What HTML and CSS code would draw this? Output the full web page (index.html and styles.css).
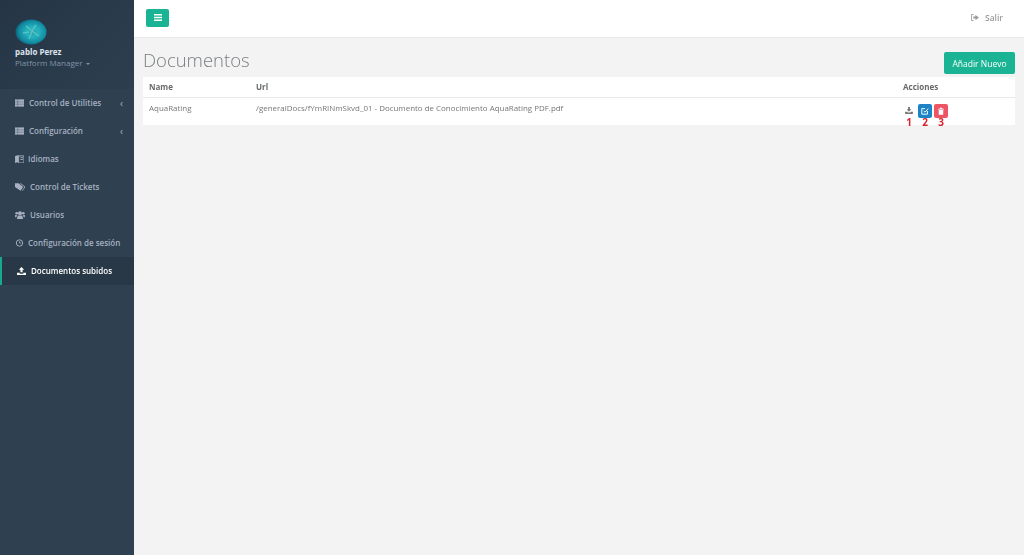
FILE: index.html
```html
<!DOCTYPE html>
<html lang="es">
<head>
<meta charset="utf-8">
<title>Documentos</title>
<link rel="stylesheet" href="styles.css">
</head>
<body>
<div class="app">
  <nav class="sidebar">
    <div class="profile">
      <svg class="avatar" viewBox="0 0 32 26" width="32" height="26">
        <defs><radialGradient id="av" cx="55%" cy="50%" r="55%"><stop offset="0" stop-color="#2f9fa8"/><stop offset="0.35" stop-color="#26b3c0"/><stop offset="0.8" stop-color="#118a9f"/><stop offset="1" stop-color="#0d5f78"/></radialGradient></defs>
        <ellipse cx="16" cy="13" rx="15.500" ry="12.500" fill="url(#av)"/>
        <path d="M11 7l6 5 4-6M17 12l-3 8M17 12l7 5M8 14l6-1" stroke="#54c4c4" stroke-width="1.400" fill="none"/>
      </svg>
      <div class="user-name">pablo Perez</div>
      <div class="user-role">Platform Manager <span class="caret"></span></div>
    </div>
    <ul class="menu">
      <li class="item"><svg class="ic" viewBox="0 0 10 8"><path d="M0 0h10v8H0z" fill="currentColor"/><path d="M3 0v8M0 2.700h10M0 5.300h10" stroke="#2f4050" stroke-width=".4"/></svg><span>Control de Utilities</span><span class="chev">‹</span></li>
      <li class="item"><svg class="ic" viewBox="0 0 10 8"><path d="M0 0h10v8H0z" fill="currentColor"/><path d="M3 0v8M0 2.700h10M0 5.300h10" stroke="#2f4050" stroke-width=".4"/></svg><span>Configuración</span><span class="chev">‹</span></li>
      <li class="item"><svg class="ic small" viewBox="0 0 10 9"><path d="M0 1l4-1v8L0 9z" fill="currentColor"/><path d="M4 1h6v8H4z" fill="none" stroke="currentColor"/><path d="M6 3h3M6 5h3" stroke="currentColor"/></svg><span>Idiomas</span></li>
      <li class="item"><svg class="ic wide" viewBox="0 0 11 8"><path d="M0 0h4l5 4-3 4-6-4z" fill="currentColor"/><path d="M6 0l5 4-3 4" fill="none" stroke="currentColor"/></svg><span>Control de Tickets</span></li>
      <li class="item"><svg class="ic wide" viewBox="0 0 11 9"><circle cx="5.500" cy="2.500" r="2.200" fill="currentColor"/><circle cx="1.800" cy="2.500" r="1.500" fill="currentColor"/><circle cx="9.200" cy="2.500" r="1.500" fill="currentColor"/><path d="M3 5h5l1 4H2zM0 4.500h2L1.500 7H0zM9 4.500h2V7H9.500z" fill="currentColor"/></svg><span>Usuarios</span></li>
      <li class="item"><svg class="ic small" viewBox="0 0 10 10"><circle cx="5" cy="5" r="4" fill="none" stroke="currentColor" stroke-width="1.200"/><path d="M5 2.800V5h2" fill="none" stroke="currentColor"/></svg><span>Configuración de sesión</span></li>
      <li class="item active"><svg class="ic up" viewBox="0 0 10 9"><path d="M5 0l3 3H6.200v3H3.800V3H2zM0 6.500h3v1h4v-1h3V9H0z" fill="currentColor"/></svg><span>Documentos subidos</span></li>
    </ul>
  </nav>
  <main class="main">
    <header class="topbar">
      <button class="toggle"><svg viewBox="0 0 8 7" width="8" height="7"><path d="M0 .7h8M0 3.500h8M0 6.300h8" stroke="#fff" stroke-width="1.400"/></svg></button>
      <div class="logout"><svg viewBox="0 0 9 8" width="8" height="7"><path d="M3 .5H.5v7H3" fill="none" stroke="currentColor"/><path d="M5 1l4 3-4 3V5.200H2.500V2.800H5z" fill="currentColor"/></svg><span>Salir</span></div>
    </header>
    <section class="content">
      <div class="heading">
        <h1>Documentos</h1>
        <button class="add">Añadir Nuevo</button>
      </div>
      <table class="table">
        <thead>
          <tr><th class="c1">Name</th><th class="c2">Url</th><th class="c3">Acciones</th></tr>
        </thead>
        <tbody>
          <tr>
            <td>AquaRating</td>
            <td>/generalDocs/fYmRINmSkvd_01 - Documento de Conocimiento AquaRating PDF.pdf</td>
            <td class="actions">
              <div class="act">
                <div class="act-col"><span class="ab plain"><svg viewBox="0 0 10 9" width="8" height="7"><path d="M3.800 0h2.400v3H8L5 6 2 3h1.800zM0 6h2.500l1 1.200h3L7.500 6H10v3H0z" fill="#777"/></svg></span><b>1</b></div>
                <div class="act-col"><span class="ab blue"><svg viewBox="0 0 10 10" width="8" height="8"><path d="M8 5v4H1V2h4" fill="none" stroke="#fff" stroke-width="1.200"/><path d="M3.500 5l1.500 1.500L9 2" fill="none" stroke="#fff" stroke-width="1.200"/></svg></span><b>2</b></div>
                <div class="act-col"><span class="ab red"><svg viewBox="0 0 8 10" width="6" height="8"><path d="M0 2h8v1H0zM2.500 2V.5h3V2M1 3.500h6V10H1z" fill="#fff"/></svg></span><b>3</b></div>
              </div>
            </td>
          </tr>
        </tbody>
      </table>
    </section>
  </main>
</div>
</body>
</html>
```
FILE: styles.css
```css
* { box-sizing: border-box; }
html, body { margin: 0; height: 100%; }
body { font-family: "Open Sans", "Liberation Sans", sans-serif; color: #676a6c; background: #f3f3f4; overflow: hidden; }
.app { display: flex; height: 555px; filter: blur(0.35px); }
.sidebar { width: 134px; flex: none; background: #2f4050; }
.profile { height: 89px; padding: 19px 15px 0; background: linear-gradient(135deg, #253545 0%, #2a3b4c 60%, #2d3e4f 100%); }
.avatar { display: block; }
.user-name { font-size: 8px; font-weight: 700; color: #dfe4ed; line-height: 11px; margin-top: 1px; }
.user-role { font-size: 8px; color: #8095a8; line-height: 11px; }
.caret { display: inline-block; width: 0; height: 0; border: 2.500px solid transparent; border-top-color: #8095a8; border-bottom: 0; vertical-align: 1.500px; margin-left: 1px; }
.menu { list-style: none; margin: -0.500px 0 0; padding: 0; }
.item { height: 28px; display: flex; align-items: center; padding: 0 11px 0 15px; gap: 5px; font-size: 8px; font-weight: 600; color: #a7b1c2; white-space: nowrap; }
.ic { width: 9px; height: 8px; flex: none; }
.ic.small { margin-right: -1px; }
.ic.wide { width: 10px; }
.item.active { background: #293846; color: #fff; border-left: 2.500px solid #19aa8d; padding-left: 15px; gap: 5px; }
.chev { margin-left: auto; font-size: 10px; font-weight: 400; line-height: 1; }
.main { flex: 1; display: flex; flex-direction: column; min-width: 0; }
.topbar { height: 38px; flex: none; background: #fff; border-bottom: 1px solid #e7eaec; display: flex; align-items: center; justify-content: space-between; padding: 0 21px 2px 12px; }
.toggle { width: 23px; height: 18px; background: #1ab394; border: 0; border-radius: 2px; padding: 0; display: flex; align-items: center; justify-content: center; }
.logout { display: flex; align-items: center; gap: 6px; font-size: 8.500px; font-weight: 600; color: #999c9e; }
.content { padding: 0 9px; }
.heading { height: 39px; display: flex; align-items: flex-end; justify-content: space-between; }
h1 { margin: 0; font-size: 18.500px; font-weight: 300; color: #7b7e80; line-height: 30px; padding-bottom: 2px; }
.add { width: 71px; height: 22px; margin-bottom: 3px; background: #1ab394; border: 0; border-radius: 2px; color: #fff; font: 400 8.500px "Open Sans", sans-serif; padding: 0; }
.table { width: 100%; border-collapse: collapse; background: #fff; table-layout: fixed; font-size: 8px; }
.table th { text-align: left; font-weight: 700; height: 20px; padding: 0 6px; border-bottom: 1px solid #e7eaec; color: #676a6c; }
.table td { height: 27px; padding: 0 6px 6px; color: #777; vertical-align: middle; font-size: 7.950px; }
.c1 { width: 107px; }
.c3 { width: 118px; }
.table td.actions { padding: 0 0 0 5px; vertical-align: top; }
.act { display: flex; gap: 2px; margin: 6px 0 0 0; height: 21px; padding-left: 0; }
.act-col { width: 14px; display: flex; flex-direction: column; align-items: center; }
.act-col b { color: #d9232d; font-size: 10px; line-height: 11px; font-weight: 700; margin-top: -0.500px; }
.ab { width: 14px; height: 14px; flex: none; border-radius: 2px; display: flex; align-items: center; justify-content: center; }
.ab.blue { background: #1c84c6; }
.ab.red { background: #ed5565; }
```
